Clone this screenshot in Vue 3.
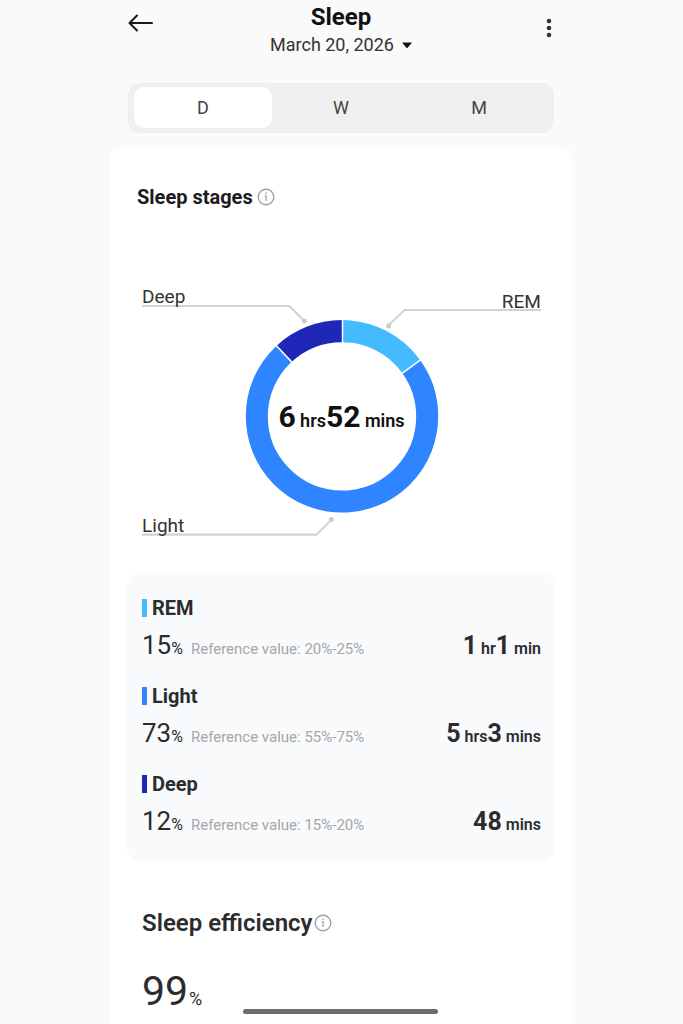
<script setup>
import { ref, computed } from 'vue'

const tabs = ['D', 'W', 'M']
const activeTab = ref('D')

const stages = [
  { name: 'REM', percent: 15, reference: '20%-25%', color: '#45bbff', time: [['1', 'hr'], ['1', 'min']] },
  { name: 'Light', percent: 73, reference: '55%-75%', color: '#2f84ff', time: [['5', 'hrs'], ['3', 'mins']] },
  { name: 'Deep', percent: 12, reference: '15%-20%', color: '#2026b8', time: [['48', 'mins']] }
]

const segments = computed(() => {
  let start = 0
  return stages.map((stage) => {
    const segment = { ...stage, start }
    start += stage.percent
    return segment
  })
})
</script>

<template>
  <div class="screen">
    <header class="header">
      <button class="icon-button" aria-label="Back">
        <svg width="26" height="20" viewBox="0 0 26 20" fill="none" stroke="#1a1a1a" stroke-width="2" stroke-linecap="round" stroke-linejoin="round">
          <path d="M24 10H2M9 2.5L1.5 10L9 17.5" />
        </svg>
      </button>
      <div class="heading">
        <h1>Sleep</h1>
        <button class="date">
          March 20, 2026
          <svg width="10" height="7" viewBox="0 0 10 7">
            <path d="M1 .5h8q1 0 .4.8L5.6 5.8q-.6.6-1.2 0L.6 1.3Q0 .5 1 .5z" fill="#111" />
          </svg>
        </button>
      </div>
      <button class="icon-button more" aria-label="More options">
        <svg width="6" height="20" viewBox="0 0 6 20" fill="#333">
          <circle cx="3" cy="3" r="2.3" />
          <circle cx="3" cy="10" r="2.3" />
          <circle cx="3" cy="17" r="2.3" />
        </svg>
      </button>
    </header>

    <nav class="tabs">
      <button
        v-for="tab in tabs"
        :key="tab"
        :class="['tab', { 'active': tab === activeTab }]"
        @click="activeTab = tab"
      >
        {{ tab }}
      </button>
    </nav>

    <main class="card">
      <h2 class="title">
        Sleep stages
        <svg class="info" width="18" height="18" viewBox="0 0 18 18" fill="none" stroke="#a3a3a3">
          <circle cx="9" cy="9" r="7.8" stroke-width="1.4" />
          <path d="M7.8 7.9H9.1V13" stroke-width="1.3" />
          <circle cx="9" cy="5.3" r=".9" fill="#a3a3a3" stroke="none" />
        </svg>
      </h2>

      <svg class="chart" viewBox="0 0 398 256">
        <g transform="rotate(-90 199.5 132)" fill="none" stroke-width="22">
          <circle
            v-for="segment in segments"
            :key="segment.name"
            cx="199.5"
            cy="132"
            r="85"
            pathLength="100"
            :stroke="segment.color"
            :stroke-dasharray="`${segment.percent} ${100 - segment.percent}`"
            :stroke-dashoffset="-segment.start"
          />
        </g>
        <path
          v-for="segment in segments"
          :key="segment.name"
          d="M200 35v25"
          stroke="#fff"
          stroke-width="1.5"
          :transform="`rotate(${segment.start * 3.6} 199.5 132)`"
        />
        <g fill="none" stroke="#d2d2d2" stroke-width="2">
          <path d="M0 22H147L162 37" />
          <path d="M398 26H262L246 41" />
          <path d="M0 250H174L189 235" />
        </g>
        <g fill="#cbcbcb">
          <circle cx="162" cy="37" r="2.5" />
          <circle cx="246" cy="42" r="2.5" />
          <circle cx="189" cy="235" r="2.5" />
        </g>
        <g class="chart-label">
          <text x="0" y="19">Deep</text>
          <text x="398" y="24" text-anchor="end">REM</text>
          <text x="0" y="247">Light</text>
        </g>
        <text class="chart-total" x="199" y="143" text-anchor="middle">6<tspan class="chart-unit"> hrs</tspan>52<tspan class="chart-unit"> mins</tspan></text>
      </svg>

      <ul class="stages">
        <li v-for="stage in stages" :key="stage.name" class="stage">
          <h3 class="stage-name">
            <span class="marker" :style="{ backgroundColor: stage.color }"></span>
            {{ stage.name }}
          </h3>
          <div class="stage-row">
            <span class="percent">{{ stage.percent }}<small>%</small></span>
            <span class="reference">Reference value: {{ stage.reference }}</span>
            <span class="time">
              <template v-for="[value, unit] in stage.time" :key="unit">{{ value }}<small>&nbsp;{{ unit }}</small></template>
            </span>
          </div>
        </li>
      </ul>

      <section class="efficiency">
        <h2 class="title large">
          Sleep efficiency
          <svg class="info" width="18" height="18" viewBox="0 0 18 18" fill="none" stroke="#a3a3a3">
            <circle cx="9" cy="9" r="7.8" stroke-width="1.4" />
            <path d="M7.8 7.9H9.1V13" stroke-width="1.3" />
            <circle cx="9" cy="5.3" r=".9" fill="#a3a3a3" stroke="none" />
          </svg>
        </h2>
        <p class="score">99<small>%</small></p>
        <p class="note">Reference value</p>
      </section>
    </main>
    <div class="home-indicator"></div>
  </div>
</template>

<style>
body {
  background-color: #f9f9f9;
}
</style>

<style scoped>
.screen {
  box-sizing: border-box;
  display: flex;
  flex-direction: column;
  max-width: 491px;
  height: 100vh;
  margin: 0 auto;
  padding: 0 15px 0 14px;
  overflow: hidden auto;
  scrollbar-width: none;
  background-color: #fafafa;
  font-family: Roboto, sans-serif;
  color: #2b2c2e;
}
button {
  padding: 0;
  border: none;
  background: none;
  font: inherit;
  color: inherit;
  cursor: pointer;
}
h1,
h2,
h3,
p,
ul {
  margin: 0;
  padding: 0;
}
svg {
  display: block;
}
.header {
  display: grid;
  grid-template-columns: 40px 1fr 40px;
  align-items: start;
  padding: 3px 18px 0;
}
.icon-button {
  display: flex;
  padding-top: 10px;
}
.more {
  justify-content: flex-end;
  padding: 15px 2px 0 0;
}
.heading {
  text-align: center;
}
h1 {
  font-size: 24px;
  font-weight: 700;
  line-height: 28px;
  color: #111;
}
.date {
  display: inline-flex;
  align-items: center;
  gap: 8px;
  font-size: 18px;
  line-height: 28px;
  color: #333;
}
.tabs {
  display: flex;
  margin: 24px 18px 15px;
  padding: 4px 6px 5px;
  border-radius: 12px;
  background-color: #efefef;
}
.tab {
  flex: 1;
  padding-top: 1px;
  border-radius: 10px;
  font-size: 18px;
  line-height: 40px;
  color: #444;
}
.tab.active {
  background-color: #fff;
}
.card {
  flex: 1 0 auto;
  padding: 35px 17px 0;
  border-radius: 10px 10px 0 0;
  background-color: #fff;
}
.title {
  display: flex;
  align-items: center;
  gap: 4px;
  padding-left: 10px;
  font-size: 20px;
  font-weight: 700;
  line-height: 28px;
  color: #1c1c1c;
}
.title.large {
  gap: 2px;
  padding-left: 0;
  font-size: 24px;
  font-weight: 600;
  color: #2b2c2e;
}
.chart {
  box-sizing: border-box;
  width: 100%;
  margin-top: 73px;
  padding: 0 14px 0 15px;
}
.chart-label {
  font-size: 19px;
  fill: #333;
}
.chart-total {
  font-size: 30px;
  font-weight: 700;
  fill: #111;
}
.chart-unit {
  font-size: 18px;
  font-weight: 600;
}
.stages {
  display: flex;
  flex-direction: column;
  gap: 15px;
  margin-top: 32px;
  padding: 21px 14px 18px 15px;
  border-radius: 14px;
  background-color: #f8fafc;
  list-style: none;
}
.stage-name {
  display: flex;
  align-items: center;
  gap: 5px;
  margin-bottom: 5px;
  font-size: 20px;
  font-weight: 700;
  line-height: 28px;
}
.marker {
  width: 5px;
  height: 18px;
}
.stage-row {
  display: flex;
  align-items: baseline;
  line-height: 36px;
}
.percent {
  font-size: 26px;
}
.percent small {
  font-size: 16px;
}
.reference {
  margin-left: 8px;
  font-size: 15px;
  color: #a5a7a9;
}
.time {
  margin-left: auto;
  font-size: 25px;
  font-weight: 700;
}
.time small {
  font-size: 16px;
  font-weight: 600;
}
.efficiency {
  padding: 48px 15px 0;
}
.score {
  margin-top: 30px;
  font-size: 41px;
  line-height: 48px;
}
.score small {
  margin-left: 1px;
  font-size: 18px;
}
.note {
  font-size: 16px;
  line-height: 28px;
}
.home-indicator {
  position: fixed;
  bottom: 10px;
  left: 50%;
  width: 195px;
  height: 5px;
  margin-left: -99px;
  border-radius: 3px;
  background-color: #6b6b6b;
}
</style>
